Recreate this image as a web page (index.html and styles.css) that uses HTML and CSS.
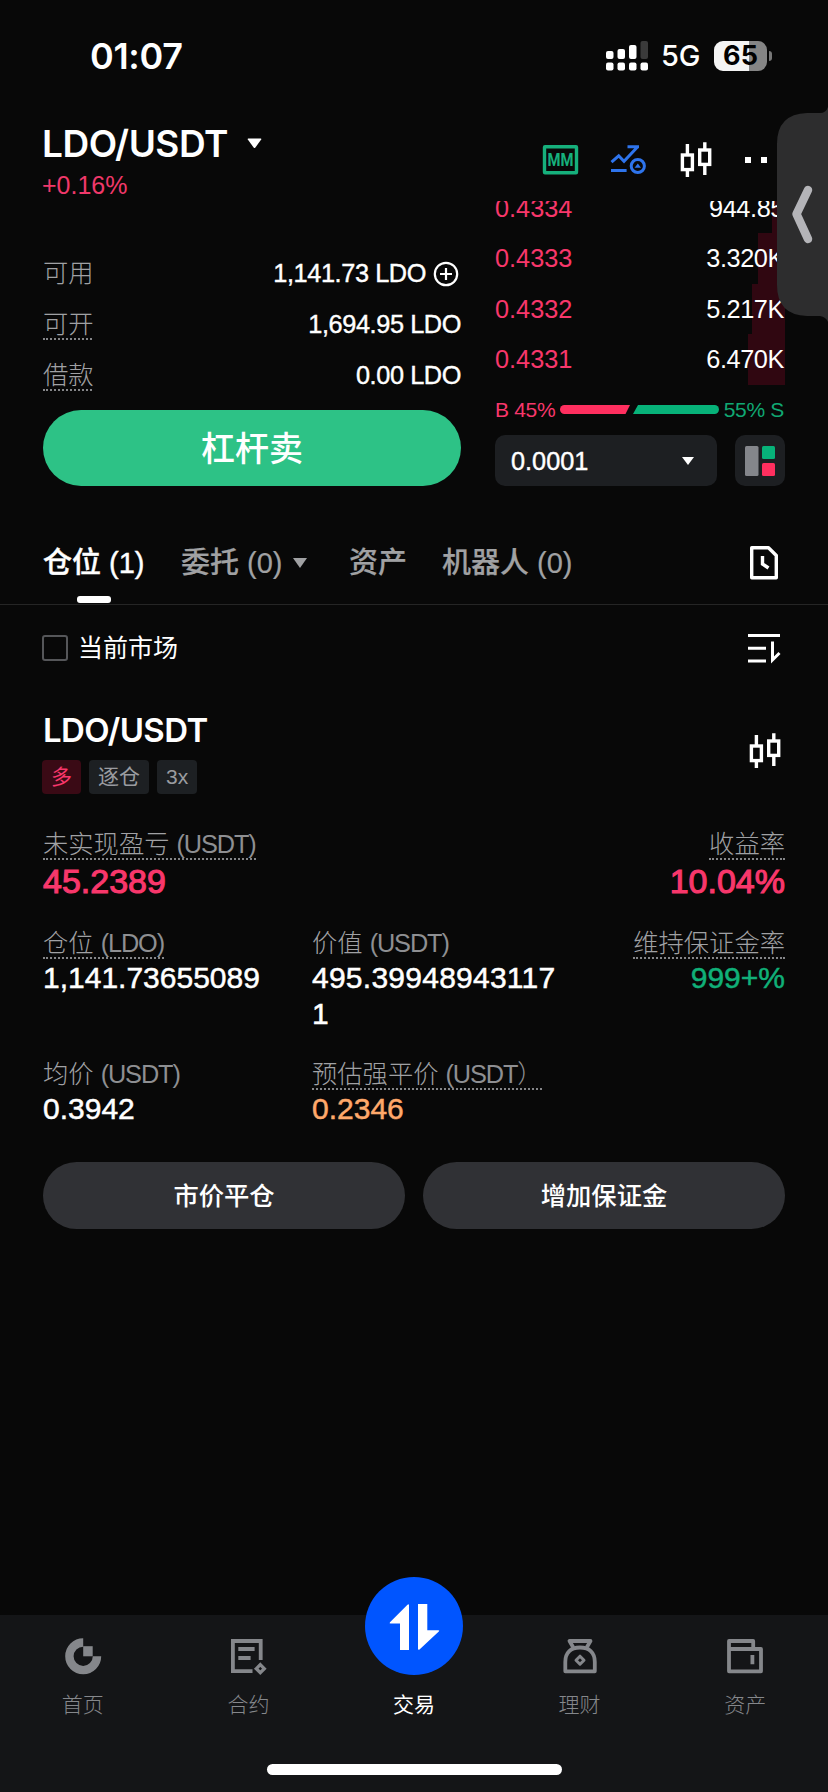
FILE: index.html
```html
<!DOCTYPE html>
<html lang="zh-CN">
<head>
<meta charset="utf-8">
<title>LDO/USDT</title>
<link rel="stylesheet" href="styles.css">
</head>
<body>
<svg class="defs" width="0" height="0">
  <symbol id="candles" viewBox="0 0 40 40">
    <g fill="none" stroke="currentColor" stroke-width="3.4">
      <rect x="6.4" y="15" width="10" height="14.6"/>
      <rect x="23.7" y="10" width="10" height="14.4"/>
      <path d="M11.4 4V15M11.4 29.6V37M28.8 2.3V10M28.8 24.4V35"/>
    </g>
  </symbol>
</svg>
<div class="screen">
  <div class="status">
    <div class="time">01:07</div>
    <svg class="signal" width="43" height="30" viewBox="0 0 43 30">
      <g fill="#fff">
        <rect x="0" y="10" width="7.5" height="8" rx="2"/><rect x="11.5" y="8" width="7.5" height="10" rx="2"/><rect x="23" y="4" width="7.5" height="14" rx="2"/>
        <rect x="0" y="21.5" width="7.5" height="8" rx="2"/><rect x="11.5" y="21.5" width="7.5" height="8" rx="2"/><rect x="23" y="21.5" width="7.5" height="8" rx="2"/><rect x="34.5" y="21.5" width="7.5" height="8" rx="2"/>
      </g>
      <rect x="34.5" y="0" width="7.5" height="18" rx="2" fill="#3a3a3a"/>
    </svg>
    <div class="network">5G</div>
    <div class="battery">65</div>
    <div class="battery-cap"></div>
  </div>

  <header class="header">
    <div>
      <div class="pair">LDO/USDT<svg width="15" height="11" viewBox="0 0 15 11"><path d="M1.2 .5H13.8Q14.8.5 14.2 1.5L8.2 9.7Q7.5 10.5 6.8 9.7L.8 1.5Q.2.5 1.2.5Z" fill="#fff"/></svg></div>
      <div class="change">+0.16%</div>
    </div>
    <div class="tools">
      <svg width="40" height="40"><rect x="4.5" y="6.8" width="32" height="26" rx=".5" fill="none" stroke="#16b07c" stroke-width="3.4"/><text class="mm" x="7.5" y="26" textLength="26" lengthAdjust="spacingAndGlyphs">MM</text></svg>
      <svg width="40" height="40"><g fill="none" stroke="#2e74ec" stroke-width="3"><path d="M3.5 22.2L10.7 15.8L16 21.3L29 7.5M19.5 6.7H31M3 30.5H18.6"/><circle cx="29.8" cy="26" r="6.6"/></g><path d="M26.6 27.8L29.8 23.4L33 27.8Z" fill="#2e74ec"/></svg>
      <svg width="40" height="40" color="#fff"><use href="#candles"/></svg>
      <svg width="40" height="40"><path d="M1 17h6v6H1zM17 17h6v6h-6z" fill="#fff"/></svg>
    </div>
  </header>

  <section class="trade">
    <div class="order">
      <div class="balance"><span class="label">可用</span><span class="amount">1,141.73 LDO<svg width="26" height="26" viewBox="0 0 26 26"><g fill="none" stroke="#fff" stroke-width="2.200"><circle cx="13" cy="13" r="11.2"/><path d="M13 7V19M7 13H19"/></g></svg></span></div>
      <div class="balance"><span class="label dotted">可开</span><span class="amount">1,694.95 LDO</span></div>
      <div class="balance"><span class="label dotted">借款</span><span class="amount">0.00 LDO</span></div>
      <button class="sell">杠杆卖</button>
    </div>
    <div class="book">
      <div class="level"><i style="width:13px"></i><span>0.4334</span><b>944.85</b></div>
      <div class="level"><i style="width:27px"></i><span>0.4333</span><b>3.320K</b></div>
      <div class="level"><i style="width:33px"></i><span>0.4332</span><b>5.217K</b></div>
      <div class="level"><i style="width:37px"></i><span>0.4331</span><b>6.470K</b></div>
      <div class="ratio">
        <span class="buy">B 45%</span>
        <svg width="159" height="9" viewBox="0 0 159 9"><path d="M4.5 0H70L65.500 9H4.500A4.500 4.500 0 0 1 4.500 0Z" fill="#ff2f5f"/><path d="M78 0H154.500A4.500 4.500 0 0 1 154.500 9H73Z" fill="#07b279"/></svg>
        <span class="ask">55% S</span>
      </div>
      <div class="controls">
        <div class="step">0.0001<svg width="12" height="8"><path d="M0 0H12L6 8Z" fill="#fff"/></svg></div>
        <div class="layout"><svg width="30" height="30"><rect width="13.500" height="30" rx="1.500" fill="#84868b"/><rect x="17" width="13" height="13" rx="1.500" fill="#07b279"/><rect x="17" y="17" width="13" height="13" rx="1.500" fill="#ff2f5f"/></svg></div>
      </div>
    </div>
  </section>

  <nav class="tabs">
    <div class="tab active">仓位 (1)</div>
    <div class="tab orders">委托 (0)<svg width="14" height="10"><path d="M0 0H14L7 10Z" fill="#a0a1a3"/></svg></div>
    <div class="tab assets">资产</div>
    <div class="tab">机器人 (0)</div>
    <svg class="history" width="40" height="40" viewBox="0 0 40 40"><g fill="none" stroke="#fff" stroke-width="3.400"><path d="M7.700 5.700H24.500L32.300 13.500V35.700H7.700Z" stroke-linejoin="round"/><path d="M18.500 14V22L24.500 26"/></g></svg>
  </nav>

  <div class="filter">
    <span class="check"></span><span class="filter-name">当前市场</span>
    <svg width="34" height="32"><g fill="none" stroke="#fff" stroke-width="3"><path d="M0 3.500H32M0 16.200H18M0 29H18M24.500 9.500V28L31.500 21"/></g></svg>
  </div>

  <section class="position">
    <div class="position-head">
      <div>
        <h2>LDO/USDT</h2>
        <div class="tags"><span class="long">多</span><span>逐仓</span><span>3x</span></div>
      </div>
      <svg width="40" height="40" color="#fff"><use href="#candles"/></svg>
    </div>
    <div class="stats">
      <div class="stat big span"><span class="label dotted">未实现盈亏 <span class="unit">(USDT)</span></span><div class="red">45.2389</div></div>
      <div class="stat big right"><span class="label dotted">收益率</span><div class="red">10.04%</div></div>
      <div class="stat"><span class="label dotted">仓位 <span class="unit">(LDO)</span></span><div>1,141.73655089</div></div>
      <div class="stat"><span class="label">价值 <span class="unit">(USDT)</span></span><div class="worth">495.399489431171</div></div>
      <div class="stat right"><span class="label dotted">维持保证金率</span><div class="green">999+%</div></div>
      <div class="stat"><span class="label">均价 <span class="unit">(USDT)</span></span><div>0.3942</div></div>
      <div class="stat"><span class="label dotted">预估强平价 <span class="unit">(USDT）</span></span><div class="orange">0.2346</div></div>
    </div>
    <div class="actions"><button>市价平仓</button><button>增加保证金</button></div>
  </section>

  <footer class="nav">
    <div class="items">
      <div class="item"><svg width="40" height="40"><path d="M20.200 6.500A13.800 13.800 0 1 0 34 20.300" fill="none" stroke="#85878b" stroke-width="8.400"/><path d="M20.200 10.200H29.700V20.300H20.200Z" fill="#85878b"/></svg><span>首页</span></div>
      <div class="item"><svg width="40" height="40"><g fill="none" stroke="#85878b" stroke-width="3.800"><path d="M24.500 35.200H4.900V5H32.700V24M10.300 13H26.600M10.300 22H22.600"/><path d="M32.300 28.700L36.300 32.700L32.300 36.700L28.300 32.700Z" stroke-width="3.300"/></g></svg><span>合约</span></div>
      <div class="item current"><span class="trade-button"><svg width="98" height="98"><path d="M25 45.200L42.500 27.700Q44 26.500 44 28.500V73H35V46.500H25.500Q24 46.500 25 45.200ZM53 27H62.300V53.300H73Q75 53.300 73.800 54.600L54.500 72.500Q53 73.500 53 71.500Z" fill="#fff"/></svg></span><span>交易</span></div>
      <div class="item"><svg width="40" height="40"><g fill="none" stroke="#85878b" stroke-width="3.800" stroke-linejoin="round"><path d="M13.300 11.500L9.500 5H30.500L26.700 11.500"/><path d="M5.300 35.300V26C5.300 16.500 11 11.500 20 11.500S34.800 16.500 34.800 26V35.300Z"/><path d="M20 20.200L24 24.200L20 28.200L16 24.200Z" stroke-width="3"/></g></svg><span>理财</span></div>
      <div class="item"><svg width="40" height="40"><g fill="none" stroke="#85878b" stroke-width="3.800" stroke-linejoin="round"><path d="M28.200 13V5H4V35.300H36V13H4M27.400 19V28.300"/></g></svg><span>资产</span></div>
    </div>
    <div class="home-bar"></div>
  </footer>

  <svg class="drawer" width="52" height="216" viewBox="0 0 52 216"><path d="M52 1Q50 7 44 7H31Q1 8 1 38V179Q1 209 31 210H44Q50 211 52 216Z" fill="#2d2d2e"/><path d="M32 84L20.500 108L32 133" fill="none" stroke="#b4b4b8" stroke-width="8.500" stroke-linecap="round" stroke-linejoin="round"/></svg>
</div>
</body>
</html>
```
FILE: styles.css
```css
* { box-sizing: border-box; }
body { margin: 0; background: #080808; }
svg { display: block; flex: none; }
.defs { position: absolute; }
button { border: 0; padding: 0; color: #fff; font: inherit; font-weight: 500; }

.screen {
  position: relative;
  display: flex;
  flex-direction: column;
  width: 828px;
  height: 1792px;
  overflow: hidden;
  color: #fff;
  font-family: "Liberation Sans", "Noto Sans CJK SC", sans-serif;
  font-size: 25.3px;
}

.status {
  display: flex;
  align-items: center;
  height: 112px;
  padding-left: 90px;
  font-family: Inter, sans-serif;
  white-space: nowrap;
}
.time { width: 516px; font-size: 36px; font-weight: 600; line-height: 40px; letter-spacing: -0.3px; }
.signal { width: 43px; }
.network { width: 53px; padding-left: 12px; font-size: 29px; font-weight: 500; line-height: 40px; letter-spacing: -0.3px; }
.battery {
  width: 53px;
  height: 30px;
  margin-left: 12px;
  border-radius: 9px;
  background: linear-gradient(to right, #f4f4f4 35px, #858585 35px);
  color: #000;
  font-size: 27px;
  font-weight: 700;
  line-height: 30px;
  text-align: center;
}
.battery-cap { width: 3px; height: 10px; margin-left: 2px; border-radius: 0 3px 3px 0; background: #777; }

.header { display: flex; justify-content: space-between; height: 89px; padding: 7px 44px 0 42px; }
.pair { display: flex; align-items: center; gap: 19px; height: 49px; font-family: Inter, sans-serif; font-size: 37px; font-weight: 600; letter-spacing: -0.5px; }
.change { margin-top: 3px; color: #f0386a; font-size: 25px; line-height: 28px; }
.tools { display: flex; gap: 28px; margin-top: 21px; }
.mm { fill: #16b07c; font: bold 17.5px Roboto, sans-serif; }

.trade { display: grid; grid-template-columns: 418px 290px; gap: 34px; height: 285px; padding-left: 43px; }
.order { padding-top: 47px; }
.balance { display: flex; align-items: center; justify-content: space-between; height: 51px; }
.amount { display: flex; align-items: center; gap: 7px; letter-spacing: -0.4px; -webkit-text-stroke: 0.4px; }
.balance svg { margin-right: 2px; }
.balance .label { width: 49px; }
.label { height: 31px; color: #a0a1a4; font-size: 25.3px; font-weight: 300; line-height: 31px; letter-spacing: 0; white-space: nowrap; }
.unit { color: #8e8f92; letter-spacing: -1.1px; }
.dotted { border-bottom: 2px dotted #858689; }
.sell { width: 418px; height: 76px; margin-top: 9px; border-radius: 38px; background: #2dc286; font-size: 34px; line-height: 78px; }

.book { height: 285px; overflow: hidden; }
.level { position: relative; display: flex; align-items: center; justify-content: space-between; height: 50.5px; padding-top: 1px; }
.level:first-child { margin-top: -18.5px; }
.level i { position: absolute; z-index: -1; top: 0; right: 0; bottom: 0; background: #300711; }
.level span { color: #f8376b; }
.level b { padding-right: 1px; font-weight: 400; letter-spacing: -0.4px; }
.ratio { display: flex; align-items: center; justify-content: space-between; height: 50.5px; padding-right: 1px; font-size: 21px; letter-spacing: -0.3px; white-space: nowrap; }
.buy { color: #f8376b; }
.ask { color: #10a873; }
.controls { display: flex; justify-content: space-between; height: 51px; }
.step, .layout { display: flex; align-items: center; border-radius: 10px; background: #1d1f22; }
.step { justify-content: space-between; width: 222px; padding: 1px 23px 0 16px; -webkit-text-stroke: 0.4px; }
.layout { justify-content: center; width: 50px; }

.tabs { display: flex; height: 83px; margin-top: 36px; padding: 0 44px 0 43px; border-bottom: 1px solid #252525; font-size: 29px; font-weight: 500; line-height: 83px; white-space: nowrap; }
.tab { position: relative; color: #a0a1a3; -webkit-text-stroke: 0.2px; }
.active { width: 138px; color: #fff; -webkit-text-stroke: 0.4px; }
.active::after { content: ""; position: absolute; left: 34px; bottom: 1px; width: 34px; height: 7px; border-radius: 3px; background: #fff; }
.orders { display: flex; align-items: center; gap: 10px; width: 168px; }
.assets { width: 93px; }
.history { margin: 20px 0 0 auto; }

.filter { display: flex; align-items: center; height: 86px; padding: 0 46px 0 42px; font-size: 25px; }
.check { width: 26px; height: 26px; margin-right: 10px; border: 2px solid #555659; border-radius: 3px; }
.filter-name { line-height: 30px; }
.filter svg { margin-left: auto; }

.position { padding: 0 43px; }
.position-head { display: flex; justify-content: space-between; height: 138px; padding-top: 19px; }
.position-head > svg { margin-top: 21px; }
h2 { margin: 0; font-family: Inter, sans-serif; font-size: 33px; font-weight: 600; line-height: 41px; letter-spacing: -0.6px; }
.tags { display: flex; gap: 8px; margin: 9px 0 0 -1px; font-size: 21px; line-height: 34px; }
.tags span { padding: 0 9px; border-radius: 4px; background: #1d2023; color: #9a9ca0; }
.tags .long { background: #3a0a15; color: #f8376b; }

.stats { display: grid; grid-template-columns: 269px 248px 225px; grid-template-rows: 99px 131px 103px; }
.stat { display: flex; flex-direction: column; align-items: flex-start; font-size: 30px; line-height: 36px; word-break: break-all; -webkit-text-stroke: 0.5px; }
.stat > .label { -webkit-text-stroke: 0; }
.stat > div { margin-top: 1px; }
.stat.big > div { margin-top: 3px; font-size: 34px; -webkit-text-stroke: 1.1px; }
.stat .worth { letter-spacing: 0.25px; }
.span { grid-column: span 2; }
.right { align-items: flex-end; }
.red { color: #f8376b; }
.green { color: #10b078; }
.orange { color: #ffa96b; }

.actions { display: flex; gap: 18px; }
.actions button { flex: 1; height: 67px; border-radius: 34px; background: #303135; line-height: 68px; }

.nav { height: 177px; margin-top: auto; background: #141517; }
.items { display: grid; grid-template-columns: repeat(5, 1fr); }
.item { position: relative; display: flex; flex-direction: column; align-items: center; gap: 14px; padding-top: 21px; color: #85878b; font-size: 21px; font-weight: 300; line-height: 30px; }
.current { padding-top: 75px; color: #fff; font-weight: 400; }
.trade-button { position: absolute; top: -38px; left: calc(50% - 49px); width: 98px; height: 98px; border-radius: 50%; background: #0055ff; }
.home-bar { width: 295px; height: 11px; margin: 44px auto 0; border-radius: 6px; background: #fff; }
.drawer { position: absolute; top: 106px; right: 0; }
```
